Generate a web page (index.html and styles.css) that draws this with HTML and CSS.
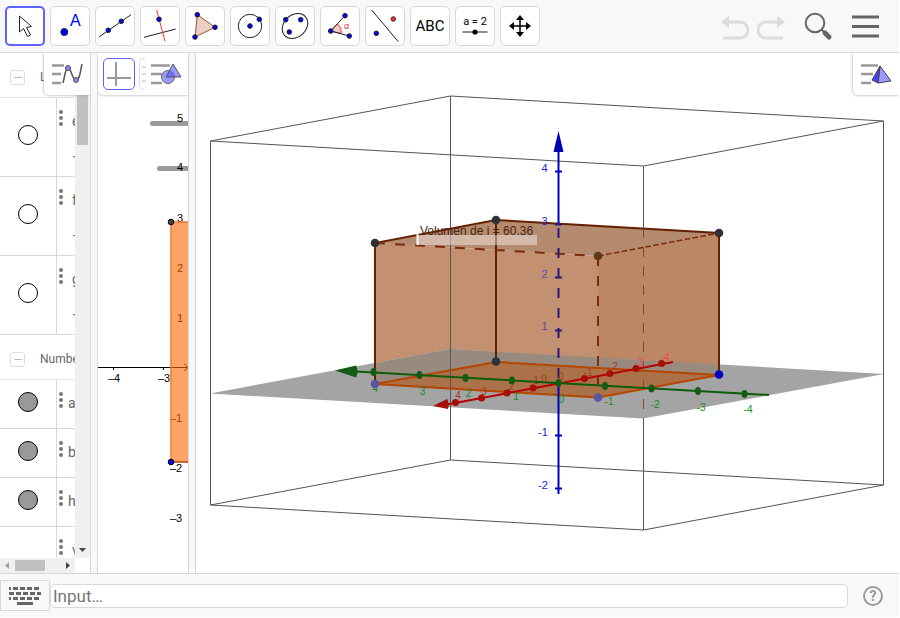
FILE: index.html
```html
<!DOCTYPE html>
<html lang="en">
  <head>
    <meta charset="UTF-8" />
    <meta name="viewport" content="width=device-width, initial-scale=1.0" />
    <title>Volumen</title>
    <link rel="stylesheet" href="styles.css">
  </head>
  <body>
    <header class="toolbar">
      <div class="tools">
        <button class="tool selected" aria-label="Move">
          <svg viewBox="0 0 40 40"><path class="ink" fill="#fff" d="M14.500 10v16l4-3.500 4 8 3-1.500-4-7.500 5-1z" /></svg>
        </button>
        <button class="tool" aria-label="Point">
          <svg viewBox="0 0 40 40"><circle class="dot" cx="14.300" cy="26" r="3.500" /><text class="blue-letter" x="20" y="20">A</text></svg>
        </button>
        <button class="tool" aria-label="Line">
          <svg viewBox="0 0 40 40"><path class="ink" d="M4 31 36 8.700" /><circle class="dot" cx="13.300" cy="24.300" r="2.300" /><circle class="dot" cx="26.300" cy="15.300" r="2.300" /></svg>
        </button>
        <button class="tool" aria-label="Perpendicular line">
          <svg viewBox="0 0 40 40"><path class="ink" d="M4 31.300 35.700 23" /><path class="red" d="M16.700 4 25 35.300" /><circle class="dot" cx="19" cy="13.300" r="2.300" /></svg>
        </button>
        <button class="tool" aria-label="Polygon">
          <svg viewBox="0 0 40 40"><path fill="#ebcfc6" stroke="#a0522d" d="M12.300 8.700 30 21.300 10 31z" /><circle class="dot" cx="12.300" cy="8.700" r="2.300" /><circle class="dot" cx="30" cy="21.300" r="2.300" /><circle class="dot" cx="10" cy="31" r="2.300" /></svg>
        </button>
        <button class="tool" aria-label="Circle with center">
          <svg viewBox="0 0 40 40"><circle class="ink" cx="20" cy="20" r="11.700" /><circle class="dot" cx="20" cy="20" r="2.300" /><circle class="dot" cx="29.300" cy="13.300" r="2.300" /></svg>
        </button>
        <button class="tool" aria-label="Ellipse">
          <svg viewBox="0 0 40 40"><ellipse class="ink" cx="20" cy="20" rx="14" ry="11" transform="rotate(-42 20 20)" /><circle class="dot" cx="10.700" cy="13.700" r="2.300" /><circle class="dot" cx="25.700" cy="13.700" r="2.300" /><circle class="dot" cx="14.300" cy="26" r="2.300" /></svg>
        </button>
        <button class="tool" aria-label="Angle">
          <svg viewBox="0 0 40 40"><path fill="#ebcfc6" stroke="#e33" d="M10.700 25 17.500 18a10 10 0 0 1 3.500 9.500z" /><path class="ink" d="M25 9.700 10.700 25 29.300 30" /><circle class="dot" cx="10.700" cy="25" r="2.300" /><circle class="dot" cx="25" cy="9.700" r="2.300" /><circle class="dot" cx="29.300" cy="30" r="2.300" /><text class="alpha" x="24" y="23">α</text></svg>
        </button>
        <button class="tool" aria-label="Reflect about line">
          <svg viewBox="0 0 40 40"><path class="ink" d="M6.700 4 33.300 35.700" /><circle class="dot" cx="11.300" cy="27.300" r="2.300" /><circle cx="28.300" cy="13" r="2.300" fill="#f22" stroke="#222" stroke-width=".8" /></svg>
        </button>
        <button class="tool" aria-label="Text">
          <svg viewBox="0 0 40 40"><text class="abc" x="20" y="25">ABC</text></svg>
        </button>
        <button class="tool" aria-label="Slider">
          <svg viewBox="0 0 40 40"><text class="slider-text" x="20" y="19">a = 2</text><path stroke="#444" stroke-width="1.200" d="M7.500 26h25" /><circle cx="20" cy="26" r="2.600" /></svg>
        </button>
        <button class="tool" aria-label="Move graphics view">
          <svg viewBox="0 0 40 40"><path stroke="#000" stroke-width="1.500" d="M20 12v16M12 20h16" /><path d="M20 9l4 5h-8zM20 31l4-5h-8zM9 20l5-4v8zM31 20l-5-4v8z" /></svg>
        </button>
      </div>
      <div class="actions">
        <button class="action" aria-label="Undo">
          <svg viewBox="0 0 30 30"><path fill="none" stroke="#dcdcdc" stroke-width="3" d="M9 11h11a8 8 0 0 1 0 16H3" /><path fill="#dcdcdc" d="M1 11l8-6v12z" /></svg>
        </button>
        <button class="action" aria-label="Redo">
          <svg viewBox="0 0 30 30"><path fill="none" stroke="#dcdcdc" stroke-width="3" d="M20 11H9a8 8 0 0 0 0 16h17" /><path fill="#dcdcdc" d="M28 11l-8-6v12z" /></svg>
        </button>
        <button class="action search" aria-label="Search">
          <svg viewBox="0 0 30 30"><circle cx="11" cy="12" r="9.300" fill="none" stroke="#666" stroke-width="2" /><path stroke="#666" stroke-width="2" d="M17 18l3 3" /><path stroke="#666" stroke-width="5" stroke-linecap="round" d="M21 22l4 4" /></svg>
        </button>
        <button class="action menu" aria-label="Menu">
          <svg viewBox="0 0 30 30"><path stroke="#666" stroke-width="3" d="M1 6h27M1 15.500h27M1 25h27" /></svg>
        </button>
      </div>
    </header>

    <main class="views">
      <section class="algebra">
        <div class="algebra-body">
          <div class="rows">
            <h2 class="group"><button class="collapse" aria-label="Collapse"></button>List</h2>
            <div class="row tall"><button class="marble" aria-label="Show e"></button><div class="value"><button class="more" aria-label="More"></button><span>e<br>–</span></div></div>
            <div class="row tall"><button class="marble" aria-label="Show f"></button><div class="value"><button class="more" aria-label="More"></button><span>f<br>–</span></div></div>
            <div class="row tall"><button class="marble" aria-label="Show g"></button><div class="value"><button class="more" aria-label="More"></button><span>g<br>–</span></div></div>
            <h2 class="group"><button class="collapse" aria-label="Collapse"></button>Number</h2>
            <div class="row"><button class="marble on" aria-label="Hide a"></button><div class="value"><button class="more" aria-label="More"></button><span>a</span></div></div>
            <div class="row"><button class="marble on" aria-label="Hide b"></button><div class="value"><button class="more" aria-label="More"></button><span>b</span></div></div>
            <div class="row"><button class="marble on" aria-label="Hide h"></button><div class="value"><button class="more" aria-label="More"></button><span>h</span></div></div>
            <div class="row last"><div class="value"><button class="more" aria-label="More"></button><span>v</span></div></div>
          </div>
          <div class="scroll-y"><div class="thumb"></div><svg viewBox="0 0 15 17"><path fill="#444" d="M4 7h7l-3.500 4z" /></svg></div>
        </div>
        <div class="scroll-x">
          <svg viewBox="0 0 15 15"><path fill="#a3a3a3" d="M9 4v7L5 7.500z" /></svg>
          <div class="thumb"></div>
          <svg viewBox="0 0 15 15"><path fill="#444" d="M6 4v7l4-3.500z" /></svg>
        </div>
        <div class="stylebar stylebar-right">
          <button class="style-button" aria-label="Algebra style bar">
            <svg viewBox="0 0 36 32"><path stroke="#999" stroke-width="2.500" d="M3 7.500h12M3 16h9M3 25h9" /><path fill="none" stroke="#555" stroke-width="1.500" d="M14 25c2-7 2-14 5-15s4 12 8 12c4 0 4-8 6-16" /><circle class="style-dot" cx="19" cy="10" r="2.500" /><circle class="style-dot" cx="27" cy="22" r="2.500" /></svg>
          </button>
        </div>
      </section>

      <section class="graphics">
        <svg class="plane" viewBox="98 53 90 520" preserveAspectRatio="xMidYMin slice">
          <path stroke="#999" stroke-width="5" stroke-linecap="round" d="M152.500 123.500H192M159.500 168.500H192" />
          <path stroke="#000" d="M98 367.500h89M113.500 367v3M163.500 367v3" />
          <path fill="none" stroke="#000" d="M184 363.500l4 4-4 4" />
          <g class="axis-text">
            <text x="180" y="122">5</text>
            <text x="180" y="171">4</text>
            <text x="180" y="221.500">3</text>
            <text x="180" y="271.500">2</text>
            <text x="180" y="321.500">1</text>
            <text x="176" y="421.500">–1</text>
            <text x="176" y="471.500">–2</text>
            <text x="176" y="521.500">–3</text>
            <text x="114" y="381.500">–4</text>
            <text x="164" y="381.500">–3</text>
          </g>
          <path fill="#ff6600" fill-opacity=".6" d="M171 222h17v240h-17z" />
          <path fill="none" stroke="#f07830" stroke-width="1.500" d="M188 222h-17v240" />
          <path stroke="#b34700" stroke-width="1.500" d="M171 462h17" />
          <circle cx="171" cy="222" r="2.800" fill="#444" stroke="#000" />
          <circle cx="171" cy="462" r="2.800" fill="#00f" stroke="#000" />
        </svg>
        <div class="stylebar">
          <button class="axes-button" aria-label="Axes"><svg viewBox="0 0 30 30"><path stroke="#999" stroke-width="2" d="M12 3v24M3 19h24" /></svg></button>
          <button class="grid-button" aria-label="Grid"><svg viewBox="0 0 6 30"><path stroke="#ddd" stroke-width="2" d="M2 8h4M2 15h4M2 22h4" /></svg></button>
          <button class="style-button" aria-label="Graphics style bar">
            <svg viewBox="0 0 36 32"><path stroke="#999" stroke-width="2.500" d="M3 7.500h19M3 16h11M3 25h11" /><circle cx="20" cy="19" r="6.500" fill="#99f" stroke="#666" /><path fill="#55f" fill-opacity=".6" stroke="#555" d="M25 6l8 13H18z" /></svg>
          </button>
        </div>
      </section>

      <section class="space">
        <svg class="scene" viewBox="196 53 703 520">
          <path fill="#a4a4a4" d="M450.500 349 884 374 643 418.500 210 393.500z" />
          <!-- clipping box -->
          <path class="box" d="M450.500 96 883.500 121 643.500 166 210.500 141zM450.500 460 883.500 485 643.500 530 210.500 505zM210.500 141v364M883.500 121v364M643.500 166v62M643.500 418v112" />
          <!-- prism faces -->
          <path fill="#c39171" d="M375 243 598 256V358L450 349 375 363z" />
          <path fill="#bb8765" d="M598 256 719 233V365L598 358z" />
          <path fill="#b58b70" d="M375 243 496 220 719 233 598 256z" />
          <path fill="#988a7f" d="M375 363 450 349 719 364.500V375L496 362 375 384z" />
          <path fill="#ab7149" d="M375 384 496 362 719 375 598 397.500z" />
          <path class="box" d="M450.500 96v364" />
          <path class="box faint" d="M643.500 228v190" />
          <path class="edge low" d="M375 384 496 362 719 375 598 397.500z" />
          <path class="edge" d="M375 383V243L496 220 719 233V374M496 220V362" />
          <path class="edge dashed" d="M375 243 598 256M598 256V397" />
          <path class="edge thin" d="M598 256 719 233" />

          <!-- z axis -->
          <g class="z-text">
            <text x="544.500" y="172">4</text>
            <text x="544.500" y="225">3</text>
            <text class="inside" x="544.500" y="278">2</text>
            <text class="inside" x="544.500" y="330">1</text>
            <text x="543" y="436">-1</text>
            <text x="543" y="489">-2</text>
          </g>
          <g class="z-axis">
            <path d="M558.500 150V224M558.500 383V494" />
            <path class="hidden-axis" d="M558.500 228V383" />
            <path d="M555 171.500h7M555 435.500h7M555 488.500h7" />
            <path class="tick-hidden" d="M555 224.500h7M555 277.500h7M555 330.500h7" />
            <path class="head" d="M558.500 131l5 21h-10z" />
          </g>

          <!-- x axis -->
          <g class="x-axis">
            <path d="M447 404.500 673 362" />
            <path class="head" d="M433 406l14-7c2 3 2 7 1 10z" />
            <circle cx="455.500" cy="402.500" r="3.500" /><circle cx="481.500" cy="398" r="3.500" /><circle cx="507" cy="393" r="3.500" /><circle cx="533" cy="388" r="3.500" />
            <circle cx="584.500" cy="378.500" r="3.500" /><circle cx="610" cy="373.500" r="3.500" /><circle cx="636" cy="368.500" r="3.500" /><circle cx="661.500" cy="363.500" r="3.500" />
          </g>
          <g class="x-text">
            <text x="458" y="399">4</text>
            <text x="484" y="395">3</text>
            <text x="511" y="390">2</text>
            <text x="536" y="384">1</text>
            <text x="544" y="383">0</text>
            <text x="561" y="380">0</text>
            <text x="588" y="376">-1</text>
            <text x="615" y="370">2</text>
            <text class="bright" x="639" y="366">-3</text>
            <text class="bright" x="665" y="361">-4</text>
          </g>

          <!-- y axis -->
          <g class="y-axis">
            <path d="M356 371.500 769 395" />
            <path class="head" d="M335 370.500l21-5c2 4 2 8 0 12z" />
            <ellipse cx="373.500" cy="372" rx="3" ry="4" /><ellipse cx="419.500" cy="375" rx="3" ry="4" /><ellipse cx="465.500" cy="378" rx="3" ry="4" /><ellipse cx="512" cy="380.500" rx="3" ry="4" /><ellipse cx="558.500" cy="383" rx="3" ry="4" />
            <ellipse cx="605" cy="386" rx="3" ry="4" /><ellipse cx="651.500" cy="388.500" rx="3" ry="4" /><ellipse cx="698" cy="391" rx="3" ry="4" /><ellipse cx="744.500" cy="394" rx="3" ry="4" />
          </g>
          <g class="y-text">
            <text x="375" y="392">4</text>
            <text x="422.500" y="395">3</text>
            <text x="468.500" y="397">2</text>
            <text x="516" y="400">1</text>
            <text x="561.500" y="403">0</text>
            <text x="609" y="405">-1</text>
            <text x="655" y="408">-2</text>
            <text x="701" y="411">-3</text>
            <text x="748" y="413">-4</text>
          </g>

          <g fill="#303038">
            <circle cx="375" cy="243" r="4.300" /><circle cx="496" cy="220" r="4.300" /><circle cx="719" cy="233" r="4.300" /><circle cx="496" cy="361.500" r="4.300" />
          </g>
          <circle cx="598" cy="256" r="4.300" fill="#5c3a18" />
          <circle cx="375" cy="384" r="4.300" fill="#5c54a4" />
          <circle cx="598" cy="397.500" r="4.300" fill="#5c54a4" />
          <circle cx="719" cy="374.500" r="4.300" fill="#0000c4" />

          <path fill="#fff" fill-opacity=".4" d="M417 235h120v10H417z" />
          <path stroke="#fff" stroke-width="2" d="M417.500 234v11" />
          <text class="volume" x="420" y="235">Volumen de i = 60.36</text>
        </svg>
        <div class="stylebar stylebar-right">
          <button class="style-button" aria-label="3D style bar">
            <svg viewBox="0 0 36 32"><path stroke="#999" stroke-width="2.500" d="M3 7.500h17M3 16h12M3 25h10" /><path fill="#99f" stroke="#444" d="M22 8l11 15-13 2z" /><path fill="#44f" stroke="#444" d="M22 8l-2 17-6-3z" /></svg>
          </button>
        </div>
      </section>
    </main>

    <footer class="input-bar">
      <button class="keyboard" aria-label="Keyboard">
        <svg viewBox="0 0 34 20"><path stroke="#666" stroke-width="3" stroke-dasharray="5 2" stroke-dashoffset="3" d="M1 2.500h32M1 12.500h32" /><path stroke="#666" stroke-width="3" stroke-dasharray="5 2" d="M1 7.500h32" /><path stroke="#666" stroke-width="3" d="M9 17.500h16" /></svg>
      </button>
      <input class="command" type="text" aria-label="Input" placeholder="Input…" />
      <button class="help" aria-label="Help">?</button>
    </footer>
  </body>
</html>
```

FILE: styles.css
```css
* {
  box-sizing: border-box;
}
html {
  background: #fff;
}
body {
  display: flex;
  flex-direction: column;
  height: 100vh;
  margin: 0;
  padding: 0 1px 1px 0;
  overflow: hidden;
  font-family: Roboto, sans-serif;
  color: #666;
}
button {
  display: flex;
  align-items: center;
  justify-content: center;
  flex-shrink: 0;
  padding: 0;
  border: 0;
  background: none;
  font-family: inherit;
}
svg {
  display: block;
  flex-shrink: 0;
}

.toolbar {
  display: flex;
  justify-content: space-between;
  flex-shrink: 0;
  height: 53px;
  padding: 6px 18px 6px 5px;
  background: #f8f8f8;
  border-bottom: 1px solid #d8d8d8;
}
.tools {
  display: flex;
  gap: 5px;
}
.tool {
  width: 40px;
  height: 40px;
  background: #fff;
  border: 1px solid #d8d8d8;
  border-radius: 5px;
}
.tool.selected {
  border: 2px solid #6161ff;
}
.tool svg {
  width: 40px;
  height: 40px;
}
.ink {
  fill: none;
  stroke: #222;
}
.red {
  stroke: #f33;
}
.dot {
  fill: #00f;
  stroke: #222;
}
.blue-letter {
  font: 16px "Liberation Sans", sans-serif;
  fill: #00f;
}
.alpha {
  font: 9px "Liberation Sans", sans-serif;
  fill: #e33;
}
.abc {
  font: 15px Roboto, sans-serif;
  text-anchor: middle;
}
.slider-text {
  font: 11px Roboto, sans-serif;
  text-anchor: middle;
}
.actions {
  display: flex;
  height: 40px;
  gap: 7px;
}
.action svg {
  width: 30px;
  height: 30px;
}
.search {
  margin-left: 10px;
}
.menu {
  margin-left: 10px;
}

.views {
  display: flex;
  flex: 1;
  min-height: 0;
  gap: 6px;
  background: #f8f8f8;
}
.algebra,
.graphics,
.space {
  position: relative;
  background: #fff;
  overflow: hidden;
}
.algebra,
.graphics {
  flex-shrink: 0;
}
.algebra {
  display: flex;
  flex-direction: column;
  width: 91px;
  border-right: 1px solid #d8d8d8;
}
.graphics {
  width: 92px;
  border: 1px solid #d8d8d8;
  border-width: 0 1px;
}
.space {
  flex: 1;
  border-left: 1px solid #d8d8d8;
}
.plane,
.scene {
  width: 100%;
  height: 100%;
}

.algebra-body {
  display: flex;
  flex: 1;
  min-height: 0;
}
.rows {
  width: 75px;
  overflow: hidden;
}
.group {
  display: flex;
  align-items: center;
  gap: 15px;
  height: 45px;
  margin: 0;
  padding: 4px 0 0 10px;
  border-bottom: 1px solid #e8e8e8;
  font-size: 12px;
  font-weight: 400;
}
.collapse {
  width: 15px;
  height: 15px;
  border: 1px solid #ddd;
  border-radius: 3px;
}
.collapse::before {
  content: "";
  width: 8px;
  height: 1px;
  background: #bbb;
}
.row {
  display: flex;
  align-items: center;
  height: 49px;
  padding: 0 0 4px 18px;
  border-bottom: 1px solid #d8d8d8;
}
.row.tall {
  height: 79px;
}
.row.last {
  padding-left: 56px;
  border: 0;
}
.marble {
  width: 20px;
  height: 20px;
  margin-right: 18px;
  border: 1px solid #000;
  border-radius: 50%;
  background: #fff;
}
.marble.on {
  background: #999;
}
.value {
  display: flex;
  align-items: flex-start;
  align-self: stretch;
  gap: 5px;
  margin-bottom: -4px;
  padding: 11px 0 0 2px;
  border-left: 1px solid #d8d8d8;
  font-size: 14px;
  line-height: 24px;
}
.tall .value,
.last .value {
  gap: 9px;
}
.tall .value {
  line-height: 36px;
}
.tall .value span {
  margin-top: -6px;
}
.more {
  width: 4px;
  height: 18px;
}
.more::before {
  content: "";
  width: 4px;
  height: 4px;
  border-radius: 50%;
  background: #777;
  box-shadow: 0 -6px #777, 0 6px #777;
}
.scroll-y {
  display: flex;
  flex-direction: column;
  justify-content: space-between;
  align-items: center;
  width: 15px;
  background: #f0f0f0;
}
.scroll-y .thumb {
  width: 11px;
  height: 92px;
  background: #c1c1c1;
}
.scroll-y svg {
  width: 15px;
  height: 17px;
}
.scroll-x {
  display: flex;
  align-items: center;
  justify-content: space-between;
  width: 75px;
  height: 15px;
  background: #f0f0f0;
}
.scroll-x .thumb {
  width: 30px;
  height: 11px;
  margin-right: 15px;
  background: #c1c1c1;
}
.scroll-x svg {
  width: 15px;
  height: 15px;
}

/* style bars float over the views */
.stylebar {
  position: absolute;
  top: 0;
  left: 0;
  display: flex;
  align-items: center;
  width: 90px;
  height: 42px;
  padding-left: 5px;
  background: #fff;
  border-radius: 0 0 0 5px;
  box-shadow: 0 0 3px #999;
}
.stylebar-right {
  left: auto;
  right: 0;
  width: 46px;
}
.style-button svg {
  width: 36px;
  height: 32px;
}
.axes-button {
  width: 32px;
  height: 32px;
  border: 1px solid #6161ff;
  border-radius: 5px;
}
.axes-button svg {
  width: 30px;
  height: 30px;
}
.grid-button {
  width: 6px;
  height: 32px;
  margin: 0 3px 0 4px;
  border: 1px solid #ddd;
  border-right: 0;
  border-radius: 5px 0 0 5px;
}
.grid-button svg {
  width: 6px;
  height: 30px;
}
.style-dot {
  fill: #88f;
  stroke: #555;
}

.axis-text {
  font: 11px "Liberation Sans", sans-serif;
  text-anchor: middle;
}
.scene {
  font: 10px "Liberation Sans", sans-serif;
  text-anchor: middle;
}
.box {
  fill: none;
  stroke: #555;
}
.box.faint {
  stroke: #7a4a30;
  stroke-dasharray: 10 9;
}
.edge {
  fill: none;
  stroke: #642000;
  stroke-width: 2;
}
.edge.low {
  stroke: #b34700;
}
.edge.dashed {
  stroke: #7c2c0c;
  stroke-dasharray: 10 10;
}
.edge.thin {
  stroke: #7c2c0c;
  stroke-width: 1.5;
  stroke-dasharray: 6 2;
}
.z-axis {
  stroke: #0000c4;
  stroke-width: 2;
}
.z-axis .head {
  fill: #0000b4;
  stroke: none;
}
.hidden-axis {
  stroke: #28187a;
  stroke-dasharray: 10 10;
}
.tick-hidden {
  stroke: #28187a;
}
.z-text {
  fill: #22d;
  font-size: 11px;
}
.z-text .inside {
  fill: #5a4ab0;
}
.x-axis {
  fill: #a41008;
  stroke: #b80000;
  stroke-width: 2;
}
.y-axis {
  fill: #145c14;
  stroke: #0c5c0c;
  stroke-width: 2;
}
.x-axis circle,
.y-axis ellipse,
.x-axis .head,
.y-axis .head {
  stroke: none;
}
.x-text {
  fill: #a03c20;
}
.x-text .bright {
  fill: #e44;
}
.y-text {
  fill: #148c20;
}
.volume {
  font-size: 12px;
  text-anchor: start;
  fill: #4a2410;
}

.input-bar {
  display: flex;
  align-items: center;
  flex-shrink: 0;
  height: 44px;
  padding-right: 16px;
  background: #f8f8f8;
  border-top: 1px solid #d8d8d8;
}
.keyboard {
  width: 50px;
  height: 31px;
  border: 1px solid #d8d8d8;
}
.keyboard svg {
  width: 34px;
  height: 20px;
}
.command {
  flex: 1;
  min-width: 0;
  height: 24px;
  margin-right: 15px;
  padding: 0 2px;
  background: #fff;
  border: 1px solid #d8d8d8;
  border-radius: 5px;
  font-family: inherit;
  font-size: 17px;
}
.command::placeholder {
  color: #777;
  opacity: 1;
}
.help {
  width: 20px;
  height: 20px;
  border: 2px solid #999;
  border-radius: 50%;
  color: #999;
  font-size: 14px;
  font-weight: 700;
  line-height: 16px;
}
```
